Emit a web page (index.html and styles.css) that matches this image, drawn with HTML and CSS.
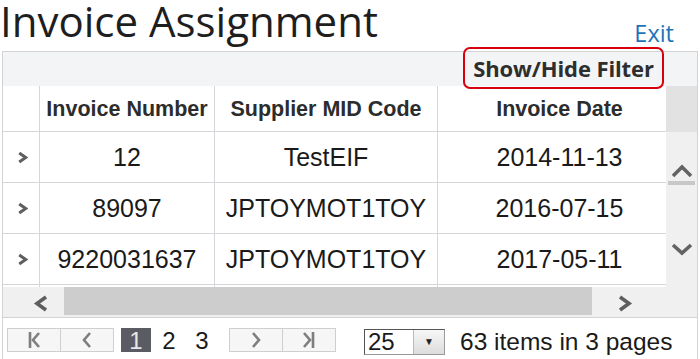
FILE: index.html
```html
<!DOCTYPE html>
<html>
<head>
<meta charset="utf-8">
<link rel="stylesheet" href="styles.css">
</head>
<body>
<div class="page">
  <div class="title-row">
    <h1 class="title">Invoice Assignment</h1>
    <a class="exit">Exit</a>
  </div>
  <div class="grid">
    <div class="toolbar">
      <button class="filter-btn">Show/Hide Filter</button>
    </div>
    <div class="body">
      <div class="data">
        <div class="row head">
          <div class="cell"></div>
          <div class="cell">Invoice Number</div>
          <div class="cell">Supplier MID Code</div>
          <div class="cell">Invoice Date</div>
        </div>
        <div class="row">
          <div class="cell"><svg class="expand" viewBox="0 0 10 12"><polyline points="2,1.8 8,6 2,10.2"/></svg></div>
          <div class="cell">12</div>
          <div class="cell">TestEIF</div>
          <div class="cell">2014-11-13</div>
        </div>
        <div class="row">
          <div class="cell"><svg class="expand" viewBox="0 0 10 12"><polyline points="2,1.8 8,6 2,10.2"/></svg></div>
          <div class="cell">89097</div>
          <div class="cell">JPTOYMOT1TOY</div>
          <div class="cell">2016-07-15</div>
        </div>
        <div class="row">
          <div class="cell"><svg class="expand" viewBox="0 0 10 12"><polyline points="2,1.8 8,6 2,10.2"/></svg></div>
          <div class="cell">9220031637</div>
          <div class="cell">JPTOYMOT1TOY</div>
          <div class="cell">2017-05-11</div>
        </div>
        <div class="row">
          <div class="cell"></div>
          <div class="cell"></div>
          <div class="cell"></div>
          <div class="cell"></div>
        </div>
      </div>
      <div class="vscroll">
        <div class="vhead"></div>
        <svg class="varrow up" viewBox="0 0 22 15"><polyline points="2,13 11,4 20,13"/></svg>
        <div class="vthumb"></div>
        <svg class="varrow down" viewBox="0 0 22 13"><polyline points="2,2 11,10 20,2"/></svg>
      </div>
    </div>
    <div class="hscroll">
      <div class="hleft"><svg class="harrow" viewBox="0 0 15 17"><polyline points="13,2 4,8.5 13,15"/></svg></div>
      <div class="hthumb"></div>
      <div class="hright"><svg class="harrow" viewBox="0 0 15 17"><polyline points="2,2 11,8.5 2,15"/></svg></div>
    </div>
    <div class="pager">
      <div class="btn-group">
        <span class="pbtn"><svg viewBox="0 0 20 20"><line x1="6" y1="2" x2="6" y2="18"/><polyline points="15,3 9,10 15,17"/></svg></span>
        <span class="pbtn"><svg viewBox="0 0 20 20"><polyline points="13,3 7,10 13,17"/></svg></span>
      </div>
      <div class="pages">
        <span class="pnum current">1</span>
        <span class="pnum">2</span>
        <span class="pnum">3</span>
      </div>
      <div class="btn-group">
        <span class="pbtn"><svg viewBox="0 0 20 20"><polyline points="7,3 13,10 7,17"/></svg></span>
        <span class="pbtn"><svg viewBox="0 0 20 20"><polyline points="5,3 11,10 5,17"/><line x1="14" y1="2" x2="14" y2="18"/></svg></span>
      </div>
      <div class="select">
        <span class="sel-val">25</span>
        <span class="sel-btn">&#9660;</span>
      </div>
      <span class="info">63 items in 3 pages</span>
    </div>
  </div>
</div>
</body>
</html>
```
FILE: styles.css
```css
* { box-sizing: border-box; }
html, body { margin: 0; padding: 0; background: #fff; }
body { font-family: "Liberation Sans", Arial, sans-serif; color: #1a1a1a; }
.page { width: 700px; height: 359px; overflow: hidden; }

.title-row {
  height: 51px;
  display: flex;
  justify-content: space-between;
  align-items: flex-start;
}
.title {
  margin: 0;
  font-family: "Open Sans", sans-serif;
  font-weight: 400;
  font-size: 42px;
  line-height: 42px;
  color: #1e1e1e;
}
.exit {
  margin-top: 17px;
  margin-right: 26px;
  font-family: "Open Sans", sans-serif;
  font-size: 23.5px;
  line-height: 32px;
  color: #1c75b8;
}

.grid {
  margin-left: 2px;
  width: 696px;
  border: 1px solid #d3d3d6;
  position: relative;
}
.toolbar {
  height: 34px;
  background: #f3f4f6;
  position: relative;
}
.filter-btn {
  position: absolute;
  left: 460px;
  top: -5px;
  width: 201px;
  height: 42px;
  border: 2px solid #d9000e;
  border-radius: 7px;
  background: transparent;
  font-family: "Open Sans", sans-serif;
  font-weight: 700;
  font-size: 22px;
  letter-spacing: -0.1px;
  color: #2e2e2e;
  padding: 0;
  text-align: center;
  z-index: 2;
}

.body { display: flex; height: 201px; }
.data {
  width: 663px;
  height: 201px;
  overflow: hidden;
  background: #fff;
}
.row {
  display: grid;
  grid-template-columns: 37px 175px 223px 244px;
  height: 51px;
  border-bottom: 1px solid #d6d6da;
  width: 679px;
}
.row.head { height: 46px; }
.cell {
  border-right: 1px solid #d6d6da;
  display: flex;
  align-items: center;
  justify-content: center;
  font-size: 25px;
  white-space: nowrap;
  overflow: hidden;
}
.head .cell {
  font-weight: 700;
  font-size: 21.5px;
  color: #2c2c2c;
  padding-top: 2px;
}
.expand {
  width: 11px;
  height: 13px;
  margin-left: 2px;
  fill: none;
  stroke: #5f5f5f;
  stroke-width: 2.8;
}

.vscroll {
  width: 31px;
  background: #f0f0f0;
  display: flex;
  flex-direction: column;
  align-items: center;
}
.vhead { width: 31px; height: 46px; background: #e2e2e2; }
.varrow { fill: none; stroke: #636363; stroke-width: 3.6; width: 22px; }
.varrow.up { height: 15px; margin-top: 31px; }
.vthumb { width: 27px; height: 4px; background: #c8c8c8; margin-top: 3px; }
.varrow.down { height: 13px; margin-top: 58px; }

.hscroll {
  display: flex;
  height: 30px;
  background: #f0f0f0;
}
.hleft { width: 61px; display: flex; align-items: center; padding-left: 30px; padding-top: 2px; }
.hthumb { width: 528px; height: 28px; background: #cdcdcd; }
.hright { flex: 1; display: flex; align-items: center; padding-left: 26px; padding-top: 2px; }
.harrow { width: 15px; height: 17px; fill: none; stroke: #5e5e5e; stroke-width: 3.6; }

.pager {
  border-top: 1px solid #d3d3d6;
  height: 42px;
  display: flex;
  align-items: flex-start;
  padding-top: 10px;
  padding-left: 4px;
}
.btn-group {
  display: flex;
  border: 1px solid #cfcfcf;
  background: #f6f6f6;
  height: 24px;
}
.pbtn {
  width: 52px;
  height: 22px;
  display: flex;
  align-items: center;
  justify-content: center;
}
.pbtn + .pbtn { border-left: 1px solid #cfcfcf; width: 53px; }
.pbtn svg { width: 20px; height: 20px; fill: none; stroke: #7e7e7e; stroke-width: 2.6; }
.pages { display: flex; margin-left: 7px; margin-right: 12px; }
.pnum {
  width: 30px;
  height: 24px;
  margin-right: 3px;
  text-align: center;
  font-size: 24px;
  line-height: 25px;
  color: #1a1a1a;
}
.pnum.current { background: #5b5b63; color: #e8e8e8; }
.pnum:last-child { margin-right: 0; }

.select {
  display: flex;
  margin-left: 28px;
  margin-top: 1px;
  height: 26px;
  width: 81px;
  border: 1px solid #999;
  border-top-color: #555;
  border-left-color: #555;
}
.sel-val {
  width: 48px;
  font-size: 24px;
  line-height: 24px;
  padding-left: 3px;
  background: #fff;
}
.sel-btn {
  flex: 1;
  background: linear-gradient(#f7f7f7, #dcdcdc);
  border-left: 1px solid #bbb;
  font-size: 10px;
  line-height: 24px;
  text-align: center;
  color: #222;
}
.info {
  margin-left: 15px;
  font-size: 24.5px;
  line-height: 27px;
  color: #1a1a1a;
}
```
